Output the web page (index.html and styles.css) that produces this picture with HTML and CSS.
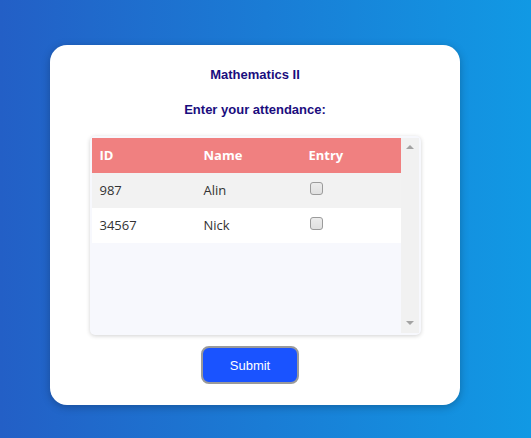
FILE: index.html
```html
<!DOCTYPE html>
<html>
<head>
<meta charset="utf-8">
<link rel="stylesheet" href="styles.css">
</head>
<body>
<div class="card">
  <h2 class="title">Mathematics II</h2>
  <h3 class="subtitle">Enter your attendance:</h3>
  <div class="table-wrap">
    <div class="table-area">
      <table class="att">
        <thead>
          <tr><th class="c1">ID</th><th class="c2">Name</th><th>Entry</th></tr>
        </thead>
        <tbody>
          <tr class="odd"><td>987</td><td>Alin</td><td><input type="checkbox"></td></tr>
          <tr class="even"><td>34567</td><td>Nick</td><td><input type="checkbox"></td></tr>
        </tbody>
      </table>
    </div>
    <div class="scrollbar">
      <span class="arrow up"></span>
      <span class="arrow down"></span>
    </div>
  </div>
  <button class="submit">Submit</button>
</div>
</body>
</html>
```
FILE: styles.css
```css
html, body {
  margin: 0;
  padding: 0;
  height: 100%;
}
body {
  background: linear-gradient(to right, #235fc6, #1199e4);
  font-family: "Liberation Sans", Arial, sans-serif;
  overflow: hidden;
}
.card {
  margin: 45px 0 0 50px;
  width: 410px;
  height: 360px;
  box-sizing: border-box;
  background: #fff;
  border-radius: 17px;
  box-shadow: 0 2px 8px rgba(0, 0, 0, 0.25);
  display: flex;
  flex-direction: column;
  align-items: center;
  padding-top: 22px;
}
.title, .subtitle {
  margin: 0;
  font-size: 13px;
  font-weight: bold;
  color: #1a0d7e;
  line-height: 15px;
}
.subtitle {
  margin-top: 20px;
}
.table-wrap {
  margin-top: 19px;
  width: 331px;
  height: 199px;
  box-sizing: border-box;
  padding: 2px;
  display: flex;
  background: #f7f8fd;
  border-radius: 5px;
  box-shadow: 0 1px 4px rgba(0, 0, 0, 0.18);
}
.table-area {
  width: 309px;
  background: #f7f8fd;
}
.scrollbar {
  width: 18px;
  background: #f1f1f1;
  display: flex;
  flex-direction: column;
  justify-content: space-between;
  align-items: center;
  padding: 7px 0 8px;
  box-sizing: border-box;
}
.arrow {
  width: 0;
  height: 0;
  border-left: 4px solid transparent;
  border-right: 4px solid transparent;
}
.arrow.up {
  border-bottom: 4px solid #a3a3a3;
}
.arrow.down {
  border-top: 4px solid #a3a3a3;
}
.att {
  width: 100%;
  border-collapse: collapse;
  table-layout: fixed;
  font-family: "Open Sans", sans-serif;
  font-size: 13px;
}
.att th {
  background: #f08080;
  color: #fff;
  font-weight: bold;
  text-align: left;
  height: 33px;
  padding: 0 8px 2px;
}
.att th.c1 { width: 88px; }
.att th.c2 { width: 89px; }
.att td {
  height: 33px;
  padding: 0 8px 2px;
  color: #333;
}
.att tr.odd td { background: #f2f2f2; }
.att tr.even td { background: #fff; }
.att input {
  appearance: none;
  -webkit-appearance: none;
  margin: 0;
  width: 13px;
  height: 13px;
  box-sizing: border-box;
  border: 1px solid #9b9b9b;
  border-radius: 3px;
  background: linear-gradient(#ececec, #e0e0e0);
  position: relative;
  top: -3px;
  left: 1px;
  vertical-align: middle;
}
.submit {
  margin-top: 11px;
  margin-right: 10px;
  width: 98px;
  height: 38px;
  background: #1a53ff;
  color: #fff;
  font-family: "Liberation Sans", Arial, sans-serif;
  font-size: 13px;
  border: 2px solid #9a9a9a;
  border-radius: 8px;
}
```
